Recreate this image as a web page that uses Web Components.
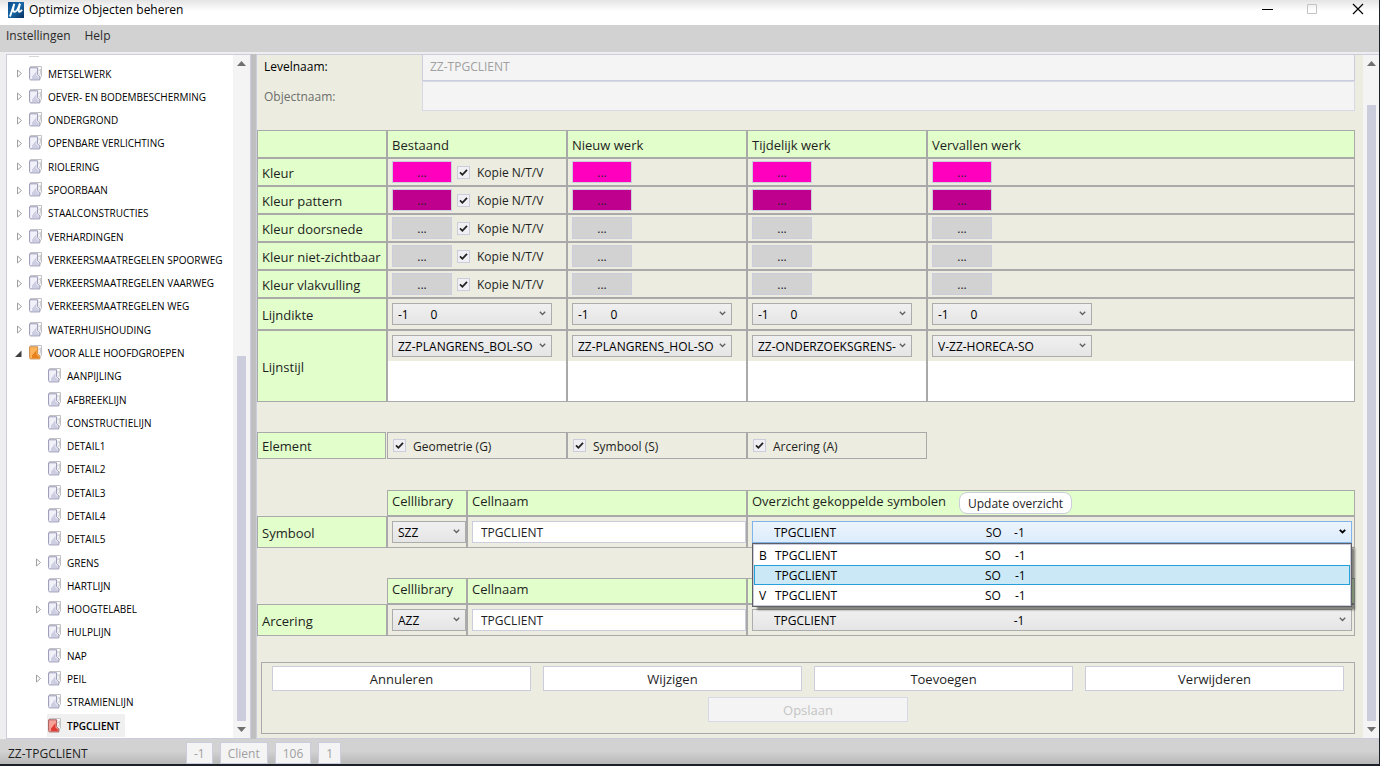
<!DOCTYPE html>
<html lang="nl">
<head>
<meta charset="utf-8">
<title>Optimize Objecten beheren</title>
<style>
  html, body { height: 100%; margin: 0; }
  body {
    --lavender: #cccddc; --grid: #a9a9a9; --green: #e2ffcb; --sand: #ecede0; --pale: #f4f4f4;
    font: 12px/16px "Open Sans", "Noto Sans", sans-serif; color: #1e1e1e; background: #1b2029; overflow: hidden;
  }
</style>
</head>
<body>
<app-window></app-window>
<script>
const define = (tag, render) => customElements.define(tag, class extends HTMLElement {
  constructor() {
    super();
    this.attachShadow({ mode: "open" });
  }
  connectedCallback() {
    if (this.shadowRoot.childNodes.length) return;
    const t = document.createElement("template");
    t.innerHTML = "<style>:host,*{box-sizing:border-box}</style>" + render(this);
    this.shadowRoot.append(t.content.cloneNode(true));
  }
});
const sp = n => "\u00a0".repeat(n);

define("scroll-track", el => `
<style>
  :host { display: flex; flex-direction: column; width: 16px; flex: none; padding-left: 4px; background: var(--pale); }
  :host([wide]) { width: 17px; }
  svg { width: 9px; height: 5px; margin: 6px 0; flex: none; fill: #707070; }
  .gap { flex: ${el.getAttribute("before")} 0 0; }
  .thumb { width: 9px; background: var(--lavender); flex: ${el.getAttribute("thumb")} 0 0; }
</style>
<svg viewBox="0 0 9 5"><path d="M4.500 0L9 5H0z"/></svg>
<div class="gap"></div><div class="thumb"></div>
<svg viewBox="0 0 9 5"><path d="M0 0h9L4.500 5z"/></svg>`);

define("title-bar", () => `
<style>
  :host { display: flex; align-items: center; height: 25px; flex: none; padding: 0 15px 6px 8px; background: linear-gradient(#e4e4e4, #fff 11px); color: #000; }
  h1 { font: inherit; margin: 0 auto 0 5px; }
  .logo { width: 16px; height: 16px; }
  button { width: 13px; height: 13px; padding: 0; border: 0; background: none; margin-left: 32px; display: block; }
  button svg { display: block; width: 13px; height: 13px; fill: none; stroke: #000; }
</style>
<svg class="logo" viewBox="0 0 16 16"><defs><linearGradient id="b" x2="1" y2="1"><stop stop-color="#0a4a8c"/><stop offset=".5" stop-color="#1668a8"/><stop offset="1" stop-color="#0a2f5e"/></linearGradient></defs>
<rect width="16" height="16" fill="url(#b)"/><path d="M6.300 1.800L2 14.500M6 3C4.600 7.500 4.800 9.800 6.800 9.800 9 9.800 10.300 6.500 11.800 1.800M12 1.800C10.800 6 9.900 9.800 11.500 9.800 12.600 9.800 13.300 9 14 7.800" fill="none" stroke="#fff" stroke-width="1.900"/></svg>
<h1>Optimize Objecten beheren</h1>
<button aria-label="Minimaliseren"><svg viewBox="0 0 13 13"><path d="M1 6.500h11"/></svg></button>
<button aria-label="Maximaliseren" disabled><svg viewBox="0 0 13 13"><path d="M1.500 1.500h9v9h-9z" style="stroke:#c4c4c4"/></svg></button>
<button aria-label="Sluiten"><svg viewBox="0 0 13 13"><path d="M2 1l10 10M12 1L2 11" stroke-width="1.200"/></svg></button>`);

define("menu-bar", () => `
<style>
  :host { display: flex; gap: 14px; height: 27px; flex: none; padding: 3px 6px 0; background: #d2d2d2; }
  button { font: inherit; color: #2b2b2b; border: 0; padding: 0; background: none; height: 16px; }
</style>
<button>Instellingen</button><button>Help</button>`);

define("tree-item", el => {
  const [main, light, edge] = ({ open: ["#e8801c", "#ffb45c", "#cf8a45"], selected: ["#e03a34", "#f7a097", "#a85c5c"] })[el.getAttribute("state")] || ["#cdcee2", "#f1f1f9", "#9697b4"];
  const exp = el.getAttribute("expander");
  return `
<style>
  :host { display: flex; align-items: center; flex: 1 0 0; min-height: 22px; padding-left: ${el.getAttribute("level") === "2" ? 29 : 10}px; font-size: 10px; color: #000; white-space: nowrap; }
  .exp { width: 5px; height: 9px; flex: none; overflow: visible; margin-right: 6px; }
  .row { display: flex; align-items: center; align-self: stretch; gap: 6px; padding: 0 5px 0 1px; }
  .icon { width: 13px; height: 15px; flex: none; margin-top: -1px; }
  :host([state=selected]) .row { background: #f0f0f0; font-weight: 600; }
</style>
<svg class="exp" viewBox="0 0 5 9">${exp === "closed" ? '<path d="M.5 1v7l4-3.500z" fill="#fff" stroke="#a0a0a0"/>' : exp === "open" ? '<path d="M4.500 1.500v6.500h-6.500z" fill="#404040"/>' : ""}</svg>
<span class="row">
<svg class="icon" viewBox="0 0 13 15"><path d="M1.500 2V.5h11v9.500L10 13.500" fill="#fafafa" stroke="#c2c2c6"/><path d="M9.500 4.500L12 3.500 10.800 9" fill="none" stroke="#c8c8cc"/>
<path d="M.6 1.800h8v6.700c0 1.500 2.200 1 2.200 2.800v2.600H2C.9 13.900.6 13.300.6 12.500z" fill="${light}" stroke="${edge}"/><path d="M3 10.500L7.500 5v4.500c.3 1.200 2.300.8 2.300 2.200v1.200H3z" fill="${main}"/></svg>
<slot></slot></span>`;
});

const closed = "METSELWERK,OEVER- EN BODEMBESCHERMING,ONDERGROND,OPENBARE VERLICHTING,RIOLERING,SPOORBAAN,STAALCONSTRUCTIES,VERHARDINGEN,VERKEERSMAATREGELEN SPOORWEG,VERKEERSMAATREGELEN VAARWEG,VERKEERSMAATREGELEN WEG,WATERHUISHOUDING".split(",");
const children = "AANPIJLING,AFBREEKLIJN,CONSTRUCTIELIJN,DETAIL1,DETAIL2,DETAIL3,DETAIL4,DETAIL5,+GRENS,HARTLIJN,+HOOGTELABEL,HULPLIJN,NAP,+PEIL,STRAMIENLIJN".split(",");
define("object-tree", () => `
<style>
  :host { display: flex; width: 245px; flex: none; background: #fff; border: 1px solid var(--lavender); }
  nav { flex: 1; min-width: 0; display: flex; flex-direction: column; padding: 1px 0; }
  /* bottom edge of the item that is scrolled out above */
  nav::before { content: ""; height: 1px; flex: none; width: 10px; margin: 0 0 5px 22px; background: #d6d6da; }
</style>
<nav aria-label="Objecten">
${closed.map(t => `<tree-item expander="closed">${t}</tree-item>`).join("")}
<tree-item expander="open" state="open">VOOR ALLE HOOFDGROEPEN</tree-item>
${children.map(t => `<tree-item level="2"${t[0] === "+" ? ' expander="closed"' : ""}>${t.replace("+", "")}</tree-item>`).join("")}
<tree-item level="2" state="selected">TPGCLIENT</tree-item>
</nav>
<scroll-track wide before="284" thumb="365"></scroll-track>`);

define("check-field", () => `
<style>
  :host { display: inline-flex; }
  label { display: flex; align-items: center; gap: 7px; }
  .box { display: grid; width: 13px; height: 13px; }
  .text { padding-top: 2px; }
  input, svg { grid-area: 1 / 1; }
  input { appearance: none; margin: 0; border: 1px solid var(--lavender); background: #f0f0f4; }
  svg { width: 13px; height: 13px; pointer-events: none; fill: none; stroke: #222; stroke-width: 1.800; visibility: hidden; }
  input:checked + svg { visibility: visible; }
</style>
<label><span class="box"><input type="checkbox" checked><svg viewBox="0 0 13 13"><path d="M3 6.300l2.400 2.500L10 3.800"/></svg></span><span class="text"><slot></slot></span></label>`);

define("drop-down", el => `
<style>
  :host { display: grid; height: 22px; color: #000; }
  select, svg { grid-area: 1 / 1; }
  select { appearance: none; font: inherit; color: inherit; min-width: 0; width: 100%; margin: 0; border: 1px solid #acacac; border-radius: 0; padding: 2px 15px 0 5px; background: linear-gradient(#f0f0f0, #e5e5e5); outline: 0; text-overflow: clip; }
  :host([wide]) select { padding-left: 21px; }
  :host([open]) select { border-color: #7eb4ea; background: linear-gradient(#ecf4fc, #dcecfc); }
  svg { width: 7px; height: 5px; justify-self: end; margin: 8px 6px 0 0; pointer-events: none; fill: none; stroke: #606060; stroke-width: 1.300; }
  :host([open]) svg { stroke: #000; stroke-width: 1.800; }
</style>
<select aria-label="${el.getAttribute("label")}"><option>${el.getAttribute("value")}</option></select>
<svg viewBox="0 0 7 5"><path d="M.8 .8L3.500 3.500 6.200 .8"/></svg>`);

define("symbol-popup", () => `
<style>
  :host { display: block; position: absolute; z-index: 2; top: 26px; left: 4px; right: 2px; background: #fff; border: 1px solid #5f5f66; box-shadow: 4px 4px 2px -1px rgba(0,0,0,.45); }
  ul { list-style: none; margin: 0; padding: 0; border: 1px solid var(--lavender); }
  li { display: grid; grid-template-columns: 16px 210px 30px auto; align-items: center; height: 20px; padding: 2px 4px 0; border: 1px solid transparent; color: #000; }
  li[aria-selected=true] { background: #cbe8f6; border-color: #26a0da; }
</style>
<ul role="listbox" aria-label="Gekoppelde symbolen">
${["B", "", "V"].map(k => `<li role="option" aria-selected="${!k}"><span>${k}</span><span>TPGCLIENT</span><span>SO</span><span>-1</span></li>`).join("")}
</ul>`);

define("color-button", el => `
<style>
  :host { display: inline-block; }
  button { display: block; font: inherit; color: #222; width: 60px; height: 22px; padding: 2px 0 0; border: 1px solid var(--lavender); background: ${el.getAttribute("color") || "#d2d2d2"}; }
</style>
<button aria-label="Kleur kiezen">...</button>`);

const tableCss = `
  table { border-collapse: separate; border-spacing: 0; table-layout: fixed; width: 100%; }
  th, td { border: 1px solid var(--grid); padding: 0 4px; text-align: left; vertical-align: middle; }
  th { font-weight: 400; font-size: 13px; padding-top: 2px; background: var(--green); white-space: nowrap; }
`;

define("style-table", () => {
  const names = ["Bestaand", "Nieuw werk", "Tijdelijk werk", "Vervallen werk"];
  const colors = [["Kleur", "#ff00bf"], ["Kleur pattern", "#bf008f"], ["Kleur doorsnede", ""], ["Kleur niet-zichtbaar", ""], ["Kleur vlakvulling", ""]];
  const lines = ["ZZ-PLANGRENS_BOL-SO", "ZZ-PLANGRENS_HOL-SO", "ZZ-ONDERZOEKSGRENS-", "V-ZZ-HORECA-SO"];
  return `
<style>
  :host { display: block; }
  ${tableCss}
  .first { width: 130px; } .mid { width: 180px; }
  tr { height: 28px; } .tall { height: 32px; } .preview { height: 72px; }
  .pick { display: flex; align-items: center; gap: 5px; height: 22px; }
  drop-down { width: 160px; }
  .preview td { vertical-align: top; padding-top: 4px; background: linear-gradient(var(--sand) 30px, #fff 30px); }
</style>
<table>
<colgroup><col class="first"><col class="mid"><col class="mid"><col class="mid"><col></colgroup>
<tr><th></th>${names.map(n => `<th scope="col">${n}</th>`).join("")}</tr>
${colors.map(([label, c]) => `<tr><th scope="row">${label}</th>${names.map((n, i) => `<td><div class="pick"><color-button color="${c}"></color-button>${i ? "" : "<check-field>Kopie N/T/V</check-field>"}</div></td>`).join("")}</tr>`).join("")}
<tr class="tall"><th scope="row">Lijndikte</th>${names.map(n => `<td><drop-down label="Lijndikte ${n}" value="-1${sp(7)}0"></drop-down></td>`).join("")}</tr>
<tr class="preview"><th scope="row">Lijnstijl</th>${names.map((n, i) => `<td><drop-down label="Lijnstijl ${n}" value="${lines[i]}"></drop-down></td>`).join("")}</tr>
</table>`;
});

define("element-row", () => `
<style>
  :host { display: grid; grid-template-columns: 130px repeat(3, 180px); height: 27px; }
  div { display: flex; align-items: center; border: 1px solid var(--grid); padding: 0 5px; }
  .head { background: var(--green); font-size: 13px; padding: 0 4px; margin-right: 1px; }
</style>
<div class="head">Element</div>
<div><check-field>Geometrie (G)</check-field></div>
<div><check-field>Symbool (S)</check-field></div>
<div><check-field>Arcering (A)</check-field></div>`);

define("cell-table", el => {
  const open = el.hasAttribute("open"), name = el.getAttribute("name");
  return `
<style>
  :host { display: block; }
  ${tableCss}
  .first { width: 130px; } .lib { width: 80px; } .cell { width: 280px; }
  thead tr { height: 26px; } tbody tr { height: 32px; }
  thead td { border: 0; }
  thead th { padding-top: 0; padding-bottom: 4px; }
  .lib-cell { padding-right: 0; }
  .name-cell { padding-right: 0; }
  .link-cell { padding-right: 2px; position: relative; }
  .bar { display: flex; align-items: center; gap: 13px; height: 20px; }
  button { font: inherit; font-size: 12px; color: #1e1e1e; height: 22px; padding: 1px 8px 0; border: 1px solid var(--lavender); border-radius: 8px; background: #fff; margin-top: 4px; }
  input { display: block; width: 100%; height: 22px; font: inherit; color: #1e1e1e; border: 1px solid var(--lavender); padding: 0 8px; background: #fff; outline: 0; }
</style>
<table>
<colgroup><col class="first"><col class="lib"><col class="cell"><col></colgroup>
<thead><tr><td></td><th scope="col">Celllibrary</th><th scope="col">Cellnaam</th><th scope="col">${open ? `<div class="bar">Overzicht gekoppelde symbolen<button>Update overzicht</button></div>` : ""}</th></tr></thead>
<tbody><tr><th scope="row">${name}</th>
<td class="lib-cell"><drop-down label="Celllibrary" value="${el.getAttribute("lib")}"></drop-down></td>
<td class="name-cell"><input aria-label="Cellnaam ${name}" value="TPGCLIENT"></td>
<td class="link-cell"><drop-down wide ${open ? "open" : ""} label="Gekoppeld ${name}" value="TPGCLIENT${open ? sp(48) + "SO" + sp(4) : sp(57)}-1"></drop-down>${open ? "<symbol-popup></symbol-popup>" : ""}</td></tr></tbody>
</table>`;
});

define("level-fields", () => `
<style>
  :host { display: grid; grid-template-columns: 165px 1fr; grid-template-rows: 26px 30px; align-items: stretch; }
  label { padding: 4px 0 0 7px; color: #000; }
  label + input + label { padding-top: 8px; color: #6d6d6d; }
  input { font: inherit; color: #a0a0a0; background: var(--pale); border: 1px solid var(--lavender); padding: 0 7px; margin: 0; min-width: 0; }
  #level { border-top: 0; padding-bottom: 1px; }
  #object { border-color: #d8d9e6; }
</style>
<label for="level">Levelnaam:</label><input id="level" value="ZZ-TPGCLIENT" disabled>
<label for="object">Objectnaam:</label><input id="object" disabled>`);

define("action-bar", () => `
<style>
  :host { display: grid; grid-template-columns: repeat(4, 1fr); gap: 6px 12px; border: 1px solid var(--grid); padding: 3px 10px 11px; }
  button { font: inherit; font-size: 13px; color: #1e1e1e; height: 25px; padding: 0; border: 1px solid var(--lavender); background: #fff; }
  .save { grid-column: 1 / -1; justify-self: center; width: 200px; color: #c4c4c4; background: var(--pale); border-color: #d8d9e6; }
</style>
<button>Annuleren</button><button>Wijzigen</button><button>Toevoegen</button><button>Verwijderen</button>
<button class="save" disabled>Opslaan</button>`);

define("detail-panel", () => `
<style>
  :host { display: flex; flex: 1; min-width: 0; background: var(--sand); border: 1px solid var(--lavender); border-right: 0; }
  main { flex: 1; min-width: 0; padding-right: 8px; }
  style-table { margin-top: 19px; }
  element-row { margin-top: 30px; }
  cell-table { margin-top: 31px; }
  cell-table + cell-table { margin-top: 30px; }
  action-bar { margin: 26px 0 0 4px; }
</style>
<main>
<level-fields></level-fields>
<style-table></style-table>
<element-row></element-row>
<cell-table open name="Symbool" lib="SZZ"></cell-table>
<cell-table name="Arcering" lib="AZZ"></cell-table>
<action-bar></action-bar>
</main>
<scroll-track before="33" thumb="616"></scroll-track>`);

define("status-bar", () => `
<style>
  :host { display: flex; align-items: center; height: 25px; flex: none; padding: 0 8px; background: linear-gradient(#d2d2d2 12px, #b8b8b8); }
  .name { width: 178px; padding-top: 4px; }
  .chips { display: flex; gap: 7px; padding-top: 3px; }
  output { height: 22px; line-height: 22px; padding: 0 7px; color: #a0a0a0; background: var(--pale); border: 1px solid var(--lavender); }
</style>
<span class="name">ZZ-TPGCLIENT</span>
<span class="chips"><output>-1</output><output>Client</output><output>106</output><output>1</output></span>`);

define("app-window", () => `
<style>
  :host { display: flex; flex-direction: column; height: 100vh; padding: 0 1px 2px 0; }
  .body { flex: 1; display: flex; min-height: 0; padding: 2px 0 0 6px; background: #eeeef0; }
  .splitter { width: 5px; flex: none; background: #bfbfbf; }
</style>
<title-bar></title-bar>
<menu-bar></menu-bar>
<div class="body"><object-tree></object-tree><div class="splitter"></div><detail-panel></detail-panel></div>
<status-bar></status-bar>`);
</script>
</body>
</html>
